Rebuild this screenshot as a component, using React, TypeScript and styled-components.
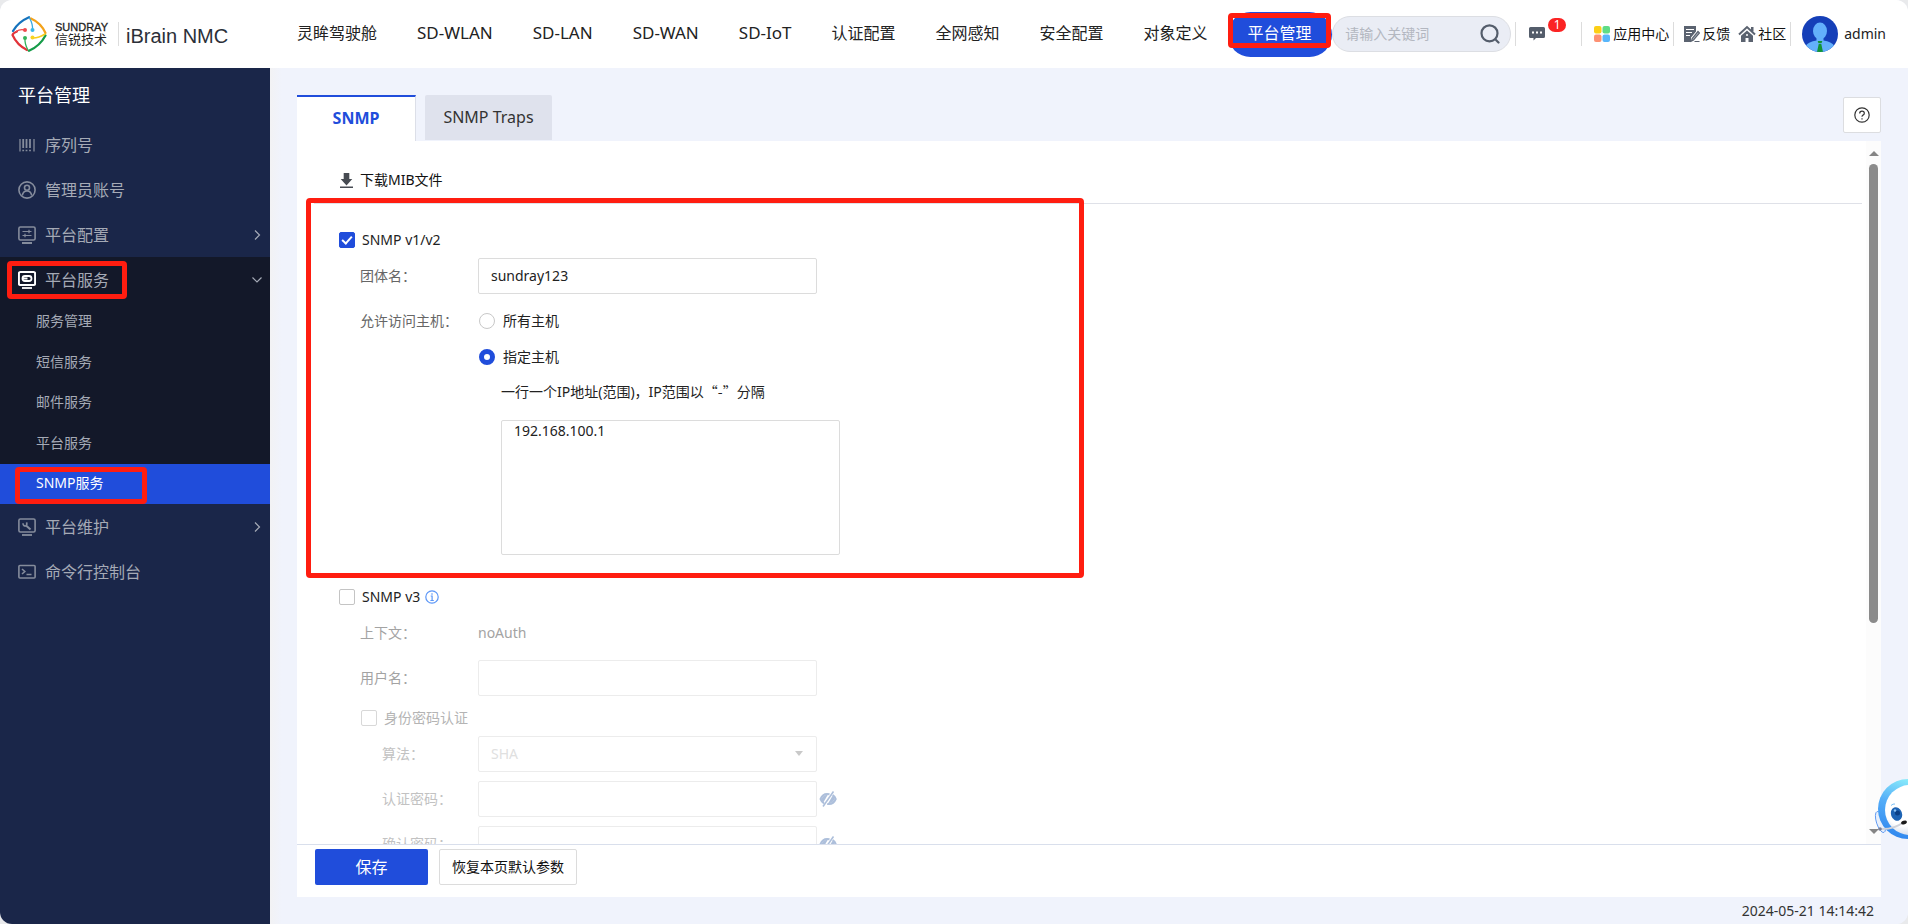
import React from "react";
import styled, { createGlobalStyle, css } from "styled-components";

const blue = "#204ddb";
const red = "#ff1d10";

const GlobalStyle = createGlobalStyle`
  *, *::before, *::after { box-sizing: border-box; }
  body {
    margin: 0;
    background: #e9eaec;
    color: #222;
    font-family: "Noto Sans", "Noto Sans CJK SC", sans-serif;
    font-size: 14px;
    line-height: 20px;
  }
  button, input, select, textarea { font: inherit; color: inherit; }
  a { color: inherit; text-decoration: none; }
`;

/* ---------- shell ---------- */

const Shell = styled.div`
  position: relative;
  display: flex;
  flex-direction: column;
  height: 100vh;
  overflow: hidden;
  border-radius: 12px;
  background: #f0f3fc;
`;

const Header = styled.header`
  display: flex;
  flex: none;
  align-items: center;
  height: 68px;
  background: #fff;
`;

const Body = styled.div`
  display: flex;
  flex: 1;
  min-height: 0;
`;

/* Red frame that marks a part of the page for the reader */
const Mark = styled.span<{ $inset: string }>`
  position: absolute;
  inset: ${(p) => p.$inset};
  z-index: 2;
  border: 5px solid ${red};
  border-radius: 4px;
  pointer-events: none;
`;

/* ---------- header ---------- */

const Brand = styled.a`
  display: flex;
  flex: none;
  align-items: center;
  width: 277px;
  padding-left: 11px;
  font-family: "Liberation Sans", "Noto Sans CJK SC", sans-serif;
`;

const BrandName = styled.span`
  display: flex;
  flex-direction: column;
  margin-left: 8px;
  padding-right: 10px;
  border-right: 1px solid #ddd;
  color: #222;
`;

const BrandLatin = styled.span`
  font-size: 11px;
  line-height: 11px;
  -webkit-text-stroke: 0.3px #222;
`;

const BrandHan = styled.span`
  font-size: 13px;
  line-height: 13px;
`;

const Product = styled.span`
  margin-left: 7px;
  color: #2b2f38;
  font-size: 20px;
  line-height: 24px;
  padding-top: 4px;
`;

const Nav = styled.nav`
  display: flex;
  flex: none;
  height: 45px;
`;

const NavLink = styled.a<{ $active?: boolean; $latin?: boolean }>`
  position: relative;
  display: flex;
  align-items: center;
  padding: 0 20px 2px;
  border-radius: 23px;
  font-size: ${(p) => (p.$latin ? 17 : 16)}px;
  white-space: nowrap;
  ${(p) => p.$active && css`
    background: ${blue};
    color: #fff;
  `}
`;

const Tools = styled.div`
  display: flex;
  align-items: center;
  margin-left: auto;
  padding-right: 22px;
`;

const Search = styled.label`
  display: flex;
  align-items: center;
  width: 179px;
  height: 36px;
  margin-right: 4px;
  padding: 0 10px 0 12px;
  border: 1px solid #dcdee3;
  border-radius: 18px;
  background: #eaedf5;
`;

const SearchInput = styled.input`
  flex: 1;
  min-width: 0;
  padding: 0;
  border: 0;
  outline: 0;
  background: none;
  &::placeholder { color: #b3b7c0; opacity: 1; }
`;

const Divider = styled.span`
  width: 1px;
  height: 24px;
  background: #dcdcdc;
`;

const Messages = styled.button`
  position: relative;
  width: 16px;
  height: 16px;
  margin: 0 36px 0 13px;
  padding: 0;
  border: 0;
  background: none;
  svg { display: block; }
`;

const Badge = styled.span`
  position: absolute;
  left: 19px;
  top: -8px;
  width: 18px;
  height: 14px;
  border-radius: 7px;
  background: #fb2323;
  color: #fff;
  font-size: 12px;
  line-height: 14px;
  text-align: center;
`;

const ToolLink = styled.a<{ $before?: number; $after?: number }>`
  display: flex;
  align-items: center;
  gap: 2px;
  margin-left: ${(p) => p.$before ?? 0}px;
  margin-right: ${(p) => p.$after ?? 0}px;
  color: #111;
  white-space: nowrap;
`;

const User = styled.a`
  display: flex;
  align-items: center;
  gap: 6px;
  margin-left: 11px;
`;

/* ---------- sidebar ---------- */

const Sidebar = styled.aside`
  flex: none;
  width: 270px;
  background: #1a2649;
  color: #a5aab6;
  overflow: hidden;
`;

const SidebarTitle = styled.h1`
  margin: 0;
  padding-left: 18px;
  color: #fff;
  font-size: 18px;
  font-weight: 400;
  line-height: 54px;
`;

const MenuGroup = styled.div<{ $open?: boolean }>`
  background: ${(p) => (p.$open ? "#131829" : "transparent")};
`;

const MenuItem = styled.a`
  position: relative;
  display: flex;
  align-items: center;
  gap: 9px;
  height: 45px;
  padding: 0 7px 0 18px;
  font-size: 16px;
  svg:last-of-type:not(:first-of-type) { margin-left: auto; }
`;

const SubMenu = styled.div`
  display: flex;
  flex-direction: column;
  justify-content: space-between;
  height: 202px;
`;

const SubItem = styled.a<{ $active?: boolean }>`
  position: relative;
  height: 40px;
  padding-left: 36px;
  line-height: 38px;
  ${(p) => p.$active && css`
    background: ${blue};
    color: #fff;
  `}
`;

/* ---------- main ---------- */

const Main = styled.main`
  display: flex;
  flex: 1;
  flex-direction: column;
  min-width: 0;
  padding: 27px 27px 0;
  background: linear-gradient(90deg, #f2f2f4, #f0f3fc 12px);
`;

const TabBar = styled.div`
  display: flex;
  flex: none;
  gap: 9px;
  height: 46px;
`;

const Tab = styled.button<{ $active?: boolean }>`
  padding: 0 0 2px;
  border: 0;
  font-size: 16px;
  ${(p) => p.$active
    ? css`
        width: 119px;
        border-top: 2px solid ${blue};
        border-right: 1px solid #dcdfe8;
        background: #fff;
        color: ${blue};
        font-weight: 700;
      `
    : css`
        width: 127px;
        height: 45px;
        border-radius: 2px 2px 0 0;
        background: #dfe2ed;
        color: #333;
      `}
`;

const HelpButton = styled.button`
  display: grid;
  place-items: center;
  width: 38px;
  height: 36px;
  margin: 2px 0 0 auto;
  padding: 0;
  border: 1px solid #dcdde0;
  border-radius: 2px;
  background: #fff;
`;

const Panel = styled.form`
  display: flex;
  flex: 1;
  flex-direction: column;
  min-height: 0;
  background: #fff;
`;

const ScrollRegion = styled.div`
  display: flex;
  flex: 1;
  min-height: 0;
`;

const Scroller = styled.div`
  flex: 1;
  overflow: auto;
  scrollbar-width: none;
`;

const Track = styled.div`
  display: flex;
  flex: none;
  flex-direction: column;
  align-items: center;
  width: 15px;
  padding: 10px 0;
  background: #fcfcfc;
`;

const Thumb = styled.div`
  flex: 459;
  width: 9px;
  margin-top: 8px;
  border-radius: 5px;
  background: #8b8b8b;
`;

const TrackRest = styled.div`
  flex: 206;
`;

const Arrow = styled.span<{ $down?: boolean }>`
  border: 5px solid transparent;
  ${(p) => p.$down
    ? css`border-top-color: #858585; border-bottom-width: 0;`
    : css`border-bottom-color: #858585; border-top-width: 0;`}
`;

const DownloadBar = styled.div`
  height: 63px;
  margin: 0 4px 0 17px;
  padding: 17px 0 0 26px;
  border-bottom: 1px solid #dfe1e8;
`;

const DownloadLink = styled.a`
  display: inline-flex;
  align-items: center;
  gap: 7px;
  height: 44px;
  color: #111;
`;

const Section = styled.section<{ $top: number }>`
  position: relative;
  padding: ${(p) => p.$top}px 0 0 42px;
`;

const SectionMark = styled(Mark)`
  right: auto;
  width: 778px;
`;

const CheckRow = styled.label<{ $nested?: boolean }>`
  display: flex;
  align-items: center;
  gap: 7px;
  height: 36px;
  ${(p) => p.$nested && css`
    height: 40px;
    padding: 3px 0 0 22px;
    color: #b4b4b4;
  `}
`;

const Checkbox = styled.input.attrs({ type: "checkbox" })`
  appearance: none;
  display: grid;
  place-items: center;
  width: 16px;
  height: 16px;
  margin: 0;
  border: 1px solid #c4c4c4;
  border-radius: 2px;
  background: #fff;
  &:disabled { border-color: #d8d8d8; }
  &:checked { border-color: ${blue}; background: ${blue}; }
  &:checked::after {
    content: "";
    width: 6px;
    height: 10px;
    margin-top: -3px;
    border: solid #fff;
    border-width: 0 2px 2px 0;
    transform: rotate(42deg);
  }
`;

const Radio = styled.input.attrs({ type: "radio" })`
  appearance: none;
  width: 16px;
  height: 16px;
  margin: 0 1px 0 1px;
  border: 1px solid #c8c8c8;
  border-radius: 50%;
  background: #fff;
  &:checked { border: 5px solid ${blue}; }
`;

const tones = { normal: "#666", dim: "#a3a3a3", faint: "#c2c2c2" };

const Row = styled.div<{ $gap?: boolean; $nested?: boolean; $tone?: keyof typeof tones }>`
  display: grid;
  grid-template-columns: ${(p) => (p.$nested ? 96 : 118)}px 1fr;
  align-items: center;
  min-height: 36px;
  margin-top: ${(p) => (p.$gap ? 9 : 0)}px;
  padding-left: ${(p) => (p.$nested ? 43 : 21)}px;
  color: ${(p) => tones[p.$tone ?? "normal"]};
`;

const field = css`
  width: 339px;
  height: 36px;
  padding: 0 12px 1px;
  border: 1px solid #dcdcdc;
  border-radius: 2px;
  background: #fff;
  color: #222;
  &:disabled { border-color: #ececec; color: #e0e0e0; opacity: 1; }
`;

const TextField = styled.input`${field}`;

const SelectBox = styled.span`
  position: relative;
  width: 339px;
`;

const SelectField = styled.select`
  ${field}
  display: block;
  appearance: none;
`;

const Caret = styled.span`
  position: absolute;
  top: 15px;
  right: 14px;
  border: 4px solid transparent;
  border-top: 5px solid #c9c9c9;
  border-bottom: 0;
`;

const FieldLine = styled.div<{ $gap?: number }>`
  display: flex;
  align-items: center;
  gap: ${(p) => p.$gap ?? 2}px;
`;

const RadioLabel = styled.label`
  display: flex;
  align-items: center;
  gap: 7px;
  color: #222;
`;

const Hosts = styled.div`
  padding-left: 162px;
`;

const Hint = styled.label`
  display: block;
  height: 34px;
  line-height: 32px;
`;

/* Chinese quotation marks take a full em each */
const Quoted = styled.span`
  font-family: "Noto Sans CJK SC", sans-serif;
`;

const HostList = styled.textarea`
  ${field}
  display: block;
  height: 135px;
  margin-top: 11px;
  padding: 0 12px;
  resize: none;
`;

const Actions = styled.footer`
  display: flex;
  flex: none;
  gap: 11px;
  height: 53px;
  padding: 4px 18px;
  border-top: 1px solid #d9dfec;
`;

const ActionButton = styled.button<{ $primary?: boolean }>`
  height: 36px;
  padding: 0;
  border-radius: 2px;
  ${(p) => p.$primary
    ? css`
        width: 113px;
        border: 0;
        background: ${blue};
        color: #fff;
        font-size: 16px;
      `
    : css`
        width: 138px;
        border: 1px solid #dcdcdc;
        background: #fff;
        color: #111;
      `}
`;

const Clock = styled.div`
  flex: none;
  padding-right: 7px;
  color: #333;
  line-height: 27px;
  text-align: right;
`;

const Mascot = styled.button`
  position: absolute;
  right: 0;
  bottom: 84px;
  width: 34px;
  height: 62px;
  padding: 0;
  border: 0;
  background: none;
  overflow: hidden;
  svg { display: block; }
`;

/* ---------- drawings ---------- */

const Logo = () => (
  <svg width="36" height="36" viewBox="0 0 36 36" fill="none" strokeWidth="2.2" strokeLinecap="round">
    <path d="M2 15Q7 6 18 1.200" stroke="#1673bd" />
    <path d="M20 2.500Q30 7 34.500 17" stroke="#f3a21b" />
    <path d="M34.500 19.500Q29 30 18 34.800" stroke="#159b48" />
    <path d="M16 34Q6 29 1.500 19Q2 17 6 15.500" stroke="#e2333a" />
    <path d="M5 15.500Q9 13 13.500 14" stroke="#ef4a4f" strokeWidth="1.300" />
    <path d="M18.500 2Q22 8 21.500 14" stroke="#37a9e0" strokeWidth="1.300" />
    <path d="M34 18Q28 22 22 22" stroke="#f7cf1d" strokeWidth="1.600" />
    <path d="M17 34Q13.500 28 14 22" stroke="#33b25b" strokeWidth="1.300" />
    <circle cx="14" cy="14" r="2" fill="#ef4a4f" />
    <circle cx="21.500" cy="14" r="2" fill="#37b7ea" />
    <circle cx="21.500" cy="21.500" r="2" fill="#f7d322" />
    <circle cx="14" cy="22" r="2" fill="#33b25b" />
  </svg>
);

const SearchIcon = () => (
  <svg width="20" height="20" viewBox="0 0 20 20" fill="none" stroke="#545d6b" strokeWidth="2.200" strokeLinecap="round">
    <circle cx="9.500" cy="9.300" r="8" />
    <path d="M15.500 15.500L18.500 18.500" />
  </svg>
);

const MessageIcon = () => (
  <svg width="16" height="16" viewBox="0 0 16 16">
    <path d="M1.500 1h13a1.500 1.500 0 0 1 1.500 1.500v8a1.500 1.500 0 0 1-1.500 1.500H7L4.500 14.500V12h-3A1.500 1.500 0 0 1 0 10.500v-8A1.500 1.500 0 0 1 1.500 1z" fill="#545d6b" />
    <path d="M3 5.500h2v2H3zM7 5.500h2v2H7zM11 5.500h2v2h-2z" fill="#fff" />
  </svg>
);

const AppsIcon = () => (
  <svg width="18" height="18" viewBox="0 0 18 18">
    <rect x="1" y="1" width="7.500" height="7.500" rx="2" fill="#fccf16" />
    <rect x="9.500" y="1" width="7.500" height="7.500" rx="2" fill="#5fdc86" />
    <rect x="1" y="9.500" width="7.500" height="7.500" rx="2" fill="#fd9173" />
    <rect x="9.500" y="9.500" width="7.500" height="7.500" rx="2" fill="#58b6fb" />
  </svg>
);

const FeedbackIcon = () => (
  <svg width="17" height="18" viewBox="0 0 17 18">
    <path d="M1 1h12v5.500L8 12.500V17H1z" fill="#5b6370" />
    <path d="M3 4.500h8M3 7.500h6M3 10.500h4" stroke="#fff" strokeWidth="1" />
    <path d="M15 6.500l1.500 1.500-6 7-2 1 .7-2.500zM11.500 16.500h5" stroke="#5b6370" strokeWidth="1.200" fill="#b3b8c0" />
  </svg>
);

const HomeIcon = () => (
  <svg width="18" height="18" viewBox="0 0 18 18">
    <path d="M13 2h2.500v4.500H13z" fill="#5b6370" />
    <path d="M1 9.500L9 2l8 7.500" fill="none" stroke="#5b6370" strokeWidth="2" />
    <path d="M9 5.500l6 5.300V17H3v-6.200z" fill="#5b6370" />
    <path d="M7.500 13h3v4h-3z" fill="#fff" />
    <circle cx="9" cy="10" r="1" fill="#fff" />
  </svg>
);

const Avatar = () => (
  <svg width="36" height="36" viewBox="0 0 36 36">
    <defs>
      <clipPath id="avatar"><circle cx="18" cy="18" r="18" /></clipPath>
    </defs>
    <g clipPath="url(#avatar)">
      <path d="M0 0h36v36H0z" fill="#153fb8" />
      <ellipse cx="18" cy="15" rx="7" ry="8.500" fill="#63b0fb" />
      <path d="M14.500 20h7v4.500q8 1 11 5.500v6h-29v-6q3-4.500 11-5.500z" fill="#63b0fb" />
      <path d="M15.700 25h4.600l-1 3 1.700 8h-6l1.700-8z" fill="#119437" />
      <path d="M15.700 27.500h4.600" stroke="#63b0fb" strokeWidth="0.800" />
    </g>
  </svg>
);

const MenuSvg = ({ children, bright }: { children: React.ReactNode; bright?: boolean }) => (
  <svg width="18" height="18" viewBox="0 0 18 18" fill="none" stroke={bright ? "#fff" : "#858c9c"} strokeWidth="1.600">
    {children}
  </svg>
);

const SerialIcon = () => (
  <MenuSvg>
    <path d="M2 3v12.500M16 3v12.500" strokeWidth="1.300" />
    <path d="M5.200 3v9M8.500 3v9M12 3v9" strokeWidth="1.800" />
    <path d="M4.300 14.500h1.800M7.600 14.500h1.800M11.100 14.500h1.800" />
  </MenuSvg>
);

const AccountIcon = () => (
  <MenuSvg>
    <circle cx="9" cy="9" r="8.100" />
    <circle cx="9" cy="6.700" r="2.500" />
    <path d="M4.300 14.500q.7-4.500 4.700-4.500t4.700 4.500" />
  </MenuSvg>
);

const Screen = () => (
  <>
    <rect x="0.900" y="1" width="16.200" height="13" rx="1.500" />
    <path d="M4 17h10" strokeWidth="1.800" />
  </>
);

const ConfigIcon = () => (
  <MenuSvg>
    <Screen />
    <path d="M4.500 5.500h9M4.500 9.500h9M11 3.700v3.600M7 7.700v3.600" strokeWidth="1.200" />
  </MenuSvg>
);

const ServiceIcon = () => (
  <MenuSvg bright>
    <g strokeWidth="2"><Screen /></g>
    <rect x="4.500" y="5" width="9" height="5" rx="2.500" strokeWidth="1.800" />
    <path d="M5 7.500h4.500" strokeWidth="2" />
  </MenuSvg>
);

const RepairIcon = () => (
  <MenuSvg>
    <Screen />
    <path d="M8 7.500l4.500 4" strokeWidth="2" />
    <path d="M5 5.200q0 3 2.800 2.800 1.700-1.500.7-3.600" />
  </MenuSvg>
);

const ConsoleIcon = () => (
  <MenuSvg>
    <rect x="0.900" y="2.500" width="16.200" height="12.500" rx="1" />
    <path d="M4 6l2.800 2.500L4 11M8.500 11.500h5" />
  </MenuSvg>
);

const Chevron = ({ down }: { down?: boolean }) => (
  <svg width="12" height="12" viewBox="0 0 12 12" fill="none" stroke="#a5aab6" strokeWidth="1.200">
    <path d={down ? "M1.500 3.500L6 8l4.500-4.500" : "M4 1.500L8.500 6 4 10.500"} />
  </svg>
);

const HelpIcon = () => (
  <svg width="16" height="16" viewBox="0 0 16 16" fill="none" stroke="#333" strokeWidth="1.200">
    <circle cx="8" cy="8" r="7.200" />
    <path d="M5.700 6.400Q5.700 4.200 8 4.200t2.300 2q0 1.200-1.300 1.900-1 .6-1 1.700" />
    <path d="M8 11.200v1.300" />
  </svg>
);

const DownloadIcon = () => (
  <svg width="13" height="15" viewBox="0 0 13 15" fill="#474b52">
    <path d="M3.700 0h5.600v6h3L6.500 12.500.7 6h3zM0 13.500h13V15H0z" />
  </svg>
);

const InfoIcon = () => (
  <svg width="14" height="14" viewBox="0 0 14 14" fill="none" stroke="#5b96f7" strokeWidth="1.200">
    <circle cx="7" cy="7" r="6.200" />
    <path d="M7 3.200v1.600M5.700 6h1.400v4.500M5.400 10.500h3.400" />
  </svg>
);

const EyeOffIcon = () => (
  <svg width="18" height="16" viewBox="0 0 18 16" fill="none" stroke="#adbfdb">
    <path d="M10.500 3.200Q4 1.700 1.500 8q1 3 3.500 4.300M13.800 4Q16 5.500 16.700 8q-2.500 6-8.500 4.900" strokeWidth="2" />
    <path d="M4 12l5-8.500-4 1-3 3.500z" fill="#adbfdb" stroke="none" />
    <path d="M14 4l-5 8.500 4-1 3-3.500z" fill="#adbfdb" stroke="none" />
    <path d="M14.500.5L4 15.500" strokeWidth="1.600" />
  </svg>
);

const MascotDrawing = () => (
  <svg width="34" height="62" viewBox="0 0 34 62">
    <defs>
      <linearGradient id="ring" x1="0.600" y1="0" x2="0.300" y2="1">
        <stop offset="0" stopColor="#8df0fb" />
        <stop offset="0.450" stopColor="#55aef8" />
        <stop offset="1" stopColor="#2f86ee" />
      </linearGradient>
      <radialGradient id="face" cx="0.400" cy="0.400" r="0.600">
        <stop offset="0.700" stopColor="#fff" />
        <stop offset="1" stopColor="#d8e0ee" />
      </radialGradient>
    </defs>
    <ellipse cx="6.500" cy="44" rx="4" ry="11" fill="#e9f0fb" stroke="#4c8ef0" strokeWidth="0.800" transform="rotate(-18 6.500 44)" />
    <circle cx="34" cy="31" r="30" fill="url(#ring)" />
    <circle cx="36" cy="32" r="25" fill="url(#face)" />
    <ellipse cx="22.500" cy="36" rx="5.500" ry="7" fill="#1d63b4" transform="rotate(-20 22.500 36)" />
    <circle cx="23.500" cy="35" r="2.500" fill="#0b3f86" />
    <circle cx="21" cy="32.500" r="1.200" fill="#8cc4f5" />
    <path d="M17 27.500q2-2 4-1.500" stroke="#7cc0f5" fill="none" />
    <path d="M6 51q13 1 24-7" stroke="#cfd2da" strokeWidth="2" fill="none" />
    <circle cx="6" cy="51" r="1.800" fill="#77809a" />
    <ellipse cx="30" cy="44.500" rx="3" ry="1.800" fill="#1a1a1a" transform="rotate(-20 30 44.500)" />
  </svg>
);

/* ---------- page ---------- */

const navItems = [
  { label: "灵眸驾驶舱" },
  { label: "SD-WLAN", latin: true },
  { label: "SD-LAN", latin: true },
  { label: "SD-WAN", latin: true },
  { label: "SD-IoT", latin: true },
  { label: "认证配置" },
  { label: "全网感知" },
  { label: "安全配置" },
  { label: "对象定义" },
];
const serviceItems = ["服务管理", "短信服务", "邮件服务", "平台服务"];

export default function App() {
  return (
    <Shell>
      <GlobalStyle />
      <Header>
        <Brand href="#">
          <Logo />
          <BrandName>
            <BrandLatin>SUNDRAY</BrandLatin>
            <BrandHan>信锐技术</BrandHan>
          </BrandName>
          <Product>iBrain NMC</Product>
        </Brand>
        <Nav>
          {navItems.map(({ label, latin }) => (
            <NavLink href="#" key={label} $latin={latin}>{label}</NavLink>
          ))}
          <NavLink href="#" $active>
            平台管理
            <Mark $inset="1px 1px 9px 0" />
          </NavLink>
        </Nav>
        <Tools>
          <Search>
            <SearchInput placeholder="请输入关键词" aria-label="搜索" />
            <SearchIcon />
          </Search>
          <Divider />
          <Messages type="button" aria-label="消息">
            <MessageIcon />
            <Badge>1</Badge>
          </Messages>
          <Divider />
          <ToolLink href="#" $before={11} $after={4}><AppsIcon />应用中心</ToolLink>
          <Divider />
          <ToolLink href="#" $before={9}><FeedbackIcon />反馈</ToolLink>
          <ToolLink href="#" $before={8} $after={4}><HomeIcon />社区</ToolLink>
          <Divider />
          <User href="#"><Avatar />admin</User>
        </Tools>
      </Header>

      <Body>
        <Sidebar>
          <SidebarTitle>平台管理</SidebarTitle>
          <MenuItem href="#"><SerialIcon />序列号</MenuItem>
          <MenuItem href="#"><AccountIcon />管理员账号</MenuItem>
          <MenuItem href="#"><ConfigIcon />平台配置<Chevron /></MenuItem>
          <MenuGroup $open>
            <MenuItem href="#">
              <ServiceIcon />平台服务<Chevron down />
              <Mark $inset="4px 143px 3px 7px" />
            </MenuItem>
            <SubMenu>
              {serviceItems.map((label) => (
                <SubItem href="#" key={label}>{label}</SubItem>
              ))}
              <SubItem href="#" $active>
                SNMP服务
                <Mark $inset="3px 123px 0 15px" />
              </SubItem>
            </SubMenu>
          </MenuGroup>
          <MenuItem href="#"><RepairIcon />平台维护<Chevron /></MenuItem>
          <MenuItem href="#"><ConsoleIcon />命令行控制台</MenuItem>
        </Sidebar>

        <Main>
          <TabBar>
            <Tab type="button" $active>SNMP</Tab>
            <Tab type="button">SNMP Traps</Tab>
            <HelpButton type="button" aria-label="帮助"><HelpIcon /></HelpButton>
          </TabBar>
          <Panel onSubmit={(e) => e.preventDefault()}>
            <ScrollRegion>
              <Scroller>
                <DownloadBar>
                  <DownloadLink href="#"><DownloadIcon />下载MIB文件</DownloadLink>
                </DownloadBar>

                <Section $top={18}>
                  <SectionMark $inset="-6px auto -23px 9px" />
                  <CheckRow><Checkbox defaultChecked />SNMP v1/v2</CheckRow>
                  <Row>
                    <label htmlFor="community">团体名：</label>
                    <TextField id="community" defaultValue="sundray123" />
                  </Row>
                  <Row $gap>
                    <span>允许访问主机：</span>
                    <RadioLabel><Radio name="hosts" />所有主机</RadioLabel>
                  </Row>
                  <Row>
                    <span />
                    <RadioLabel><Radio name="hosts" defaultChecked />指定主机</RadioLabel>
                  </Row>
                  <Hosts>
                    <Hint htmlFor="host-list">一行一个IP地址(范围)，IP范围以<Quoted>“-”</Quoted>分隔</Hint>
                    <HostList id="host-list" defaultValue="192.168.100.1" />
                  </Hosts>
                </Section>

                <Section $top={24}>
                  <CheckRow>
                    <Checkbox />
                    <FieldLine $gap={5}>SNMP v3 <InfoIcon /></FieldLine>
                  </CheckRow>
                  <Row $tone="dim">
                    <span>上下文：</span>
                    <FieldLine>noAuth</FieldLine>
                  </Row>
                  <Row $gap $tone="dim">
                    <label htmlFor="user">用户名：</label>
                    <TextField id="user" disabled />
                  </Row>
                  <CheckRow $nested><Checkbox disabled />身份密码认证</CheckRow>
                  <Row $nested $tone="faint">
                    <label htmlFor="algorithm">算法：</label>
                    <SelectBox>
                      <SelectField id="algorithm" disabled><option>SHA</option></SelectField>
                      <Caret />
                    </SelectBox>
                  </Row>
                  <Row $gap $nested $tone="faint">
                    <label htmlFor="password">认证密码：</label>
                    <FieldLine><TextField id="password" type="password" disabled /><EyeOffIcon /></FieldLine>
                  </Row>
                  <Row $gap $nested $tone="faint">
                    <label htmlFor="confirm">确认密码：</label>
                    <FieldLine><TextField id="confirm" type="password" disabled /><EyeOffIcon /></FieldLine>
                  </Row>
                </Section>
              </Scroller>
              <Track>
                <Arrow />
                <Thumb />
                <TrackRest />
                <Arrow $down />
              </Track>
            </ScrollRegion>
            <Actions>
              <ActionButton type="submit" $primary>保存</ActionButton>
              <ActionButton type="reset">恢复本页默认参数</ActionButton>
            </Actions>
          </Panel>
          <Clock>2024-05-21 14:14:42</Clock>
        </Main>
      </Body>
      <Mascot type="button" aria-label="助手"><MascotDrawing /></Mascot>
    </Shell>
  );
}
